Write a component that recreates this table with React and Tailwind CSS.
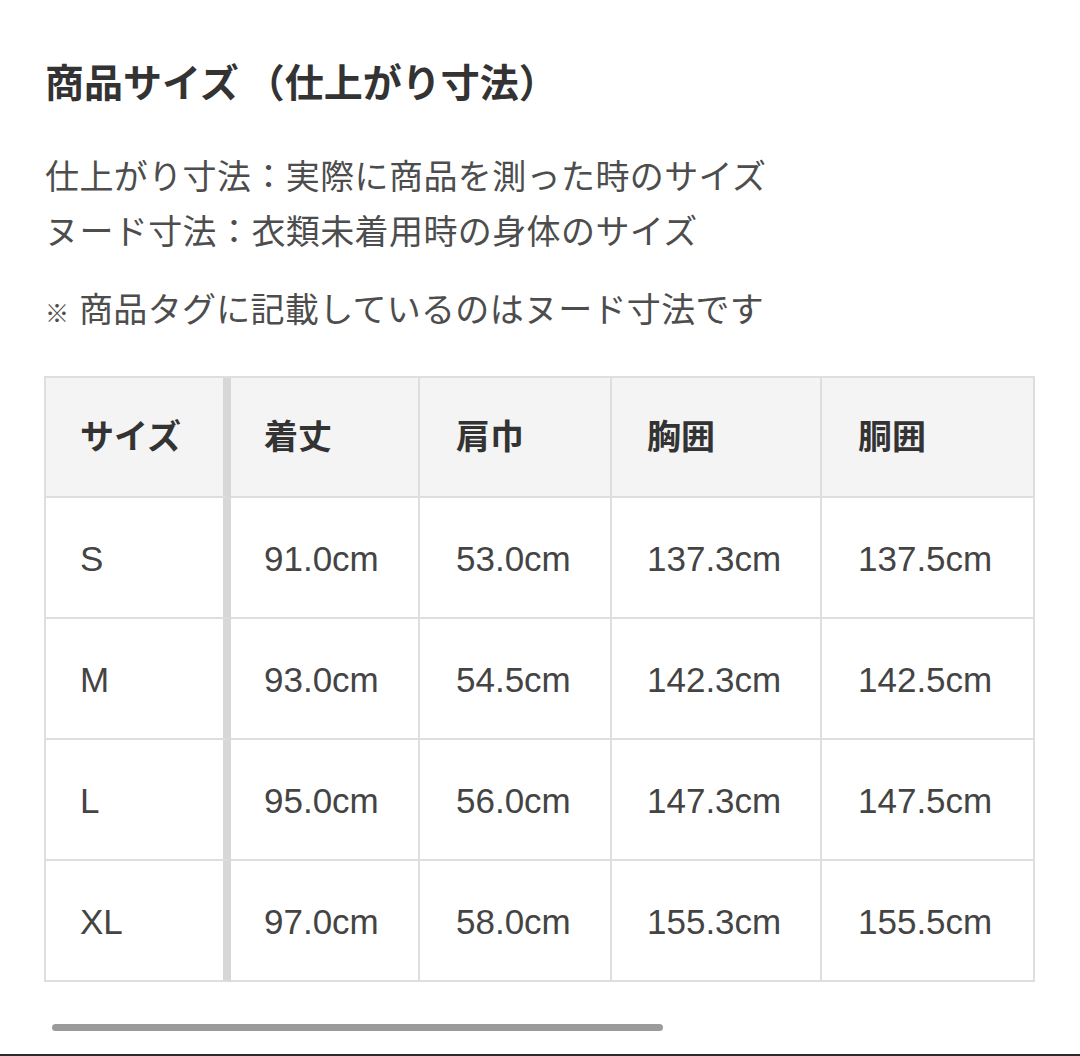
const headers = ["サイズ", "着丈", "肩巾", "胸囲", "胴囲"];

const rows = [
  ["S", "91.0cm", "53.0cm", "137.3cm", "137.5cm"],
  ["M", "93.0cm", "54.5cm", "142.3cm", "142.5cm"],
  ["L", "95.0cm", "56.0cm", "147.3cm", "147.5cm"],
  ["XL", "97.0cm", "58.0cm", "155.3cm", "155.5cm"],
];

// column widths incl. right border, and left padding of the text
const cols = [
  "w-[185px] pl-[34px] border-r-[8px] border-r-[#d7d7d7]",
  "w-[189px] pl-[33px] border-r-2",
  "w-[192px] pl-[36px] border-r-2",
  "w-[210px] pl-[35px] border-r-2",
  "w-[213px] pl-[36px] border-r-2",
];

function SizeTable() {
  return (
    <div className="ml-[44px] mt-[35px] w-[991px] border-t-2 border-l-2 border-[#dedede]">
      <div className="flex">
        {headers.map((h, i) => (
          <div
            key={h}
            className={`${cols[i]} h-[120px] flex items-center border-b-2 border-[#dedede] bg-[#f4f4f4] text-[34px] font-bold text-[#333]`}
          >
            {h}
          </div>
        ))}
      </div>
      {rows.map((row) => (
        <div key={row[0]} className="flex">
          {row.map((v, i) => (
            <div
              key={i}
              className={`${cols[i]} h-[121px] pt-[3px] flex items-center border-b-2 border-[#dedede] bg-white text-[35px] text-[#444]`}
            >
              {v}
            </div>
          ))}
        </div>
      ))}
    </div>
  );
}

export default function App() {
  return (
    <div
      className="w-[1080px] h-[1056px] bg-white flex flex-col overflow-hidden"
      style={{ fontFamily: '"Liberation Sans", "Noto Sans CJK JP", sans-serif' }}
    >
      <div className="pl-[45px] pt-[60px]">
        <h2 className="text-[39px] leading-[48px] font-bold text-[#333]">
          商品サイズ<span className="inline-block w-[46px] text-right">（</span>仕上がり寸法
          <span className="inline-block w-[39px] text-left">）</span>
        </h2>
        <div className="mt-[42px] text-[34px] leading-[55px] tracking-[0.4px] text-[#4d4d4d]">
          <p>仕上がり寸法：実際に商品を測った時のサイズ</p>
          <p>ヌード寸法：衣類未着用時の身体のサイズ</p>
        </div>
        <p className="mt-[23px] text-[34px] leading-[55px] tracking-[0.3px] text-[#4d4d4d]">
          <span className="text-[24px]">※</span> 商品タグに記載しているのはヌード寸法です
        </p>
      </div>

      <SizeTable />

      <div className="ml-[52px] mt-[42px] w-[611px] h-[7px] rounded-full bg-[#9b9b9b]" />

      <div className="mt-auto h-[2px] bg-[#2b2b2b]" />
    </div>
  );
}
